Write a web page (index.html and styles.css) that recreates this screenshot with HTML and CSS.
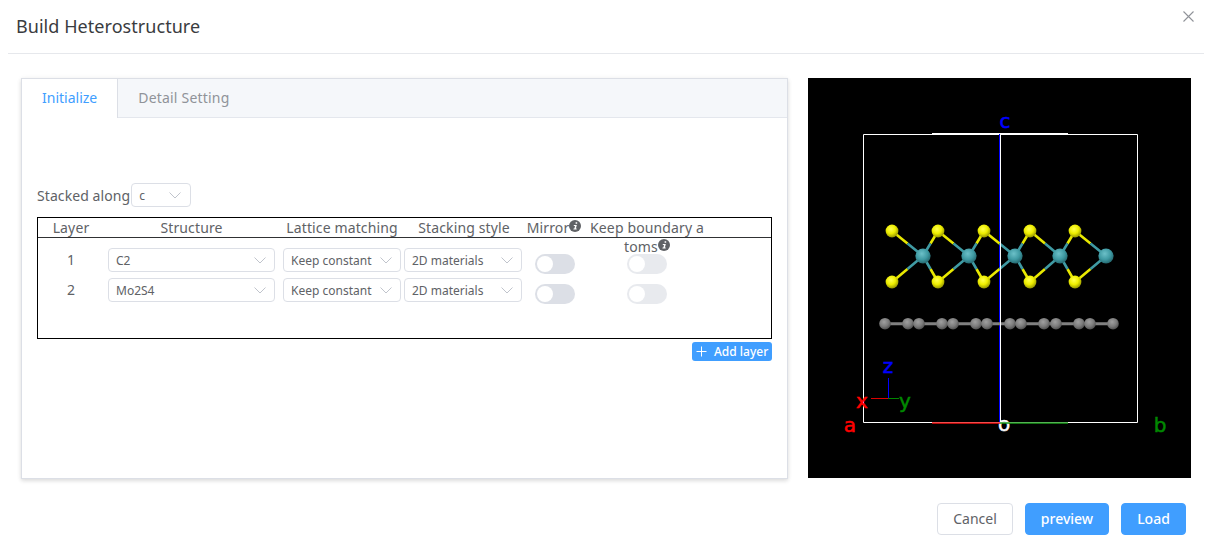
FILE: index.html
```html
<!DOCTYPE html>
<html lang="en">
<head>
<meta charset="utf-8">
<title>Build Heterostructure</title>
<link rel="stylesheet" href="styles.css">
</head>
<body>
<div class="dialog">
  <header class="dialog-header">
    <h1 class="dialog-title">Build Heterostructure</h1>
    <svg class="close-icon" viewBox="0 0 11 11"><path d="M.5.5l10 10M10.5.5l-10 10"/></svg>
  </header>
  <main class="dialog-body">
    <section class="card">
      <nav class="tabs">
        <span class="tab tab-active">Initialize</span>
        <span class="tab">Detail Setting</span>
      </nav>
      <div class="tab-content">
        <div class="stack-row">
          <span class="stack-label">Stacked along</span>
          <div class="select select-axis"><span>c</span><svg class="chevron" viewBox="0 0 12 7"><path d="M.5.5L6 6 11.5.5"/></svg></div>
        </div>
        <div class="layer-table">
          <div class="layer-grid layer-head">
            <div class="cell">Layer</div>
            <div class="cell">Structure</div>
            <div class="cell cell-shift">Lattice matching</div>
            <div class="cell cell-shift">Stacking style</div>
            <div class="cell cell-mirror">Mirror<svg class="info" viewBox="0 0 12 12"><circle cx="6" cy="6" r="6"/><path class="info-i" d="M6.6 2.2h1.6v1.6H6.6zM4.9 4.9h2.9l-.9 3.7h.9l-.2 1H4.4l.2-1h.8l.6-2.7H4.7z"/></svg></div>
            <div class="cell cell-break">Keep boundary atoms<svg class="info" viewBox="0 0 12 12"><circle cx="6" cy="6" r="6"/><path class="info-i" d="M6.6 2.2h1.6v1.6H6.6zM4.9 4.9h2.9l-.9 3.7h.9l-.2 1H4.4l.2-1h.8l.6-2.7H4.7z"/></svg></div>
          </div>
          <div class="layer-rows">
            <div class="layer-grid layer-row">
              <div class="row-num">1</div>
              <div class="select select-structure"><span>C2</span><svg class="chevron" viewBox="0 0 12 7"><path d="M.5.5L6 6 11.5.5"/></svg></div>
              <div class="select select-lattice"><span>Keep constant</span><svg class="chevron" viewBox="0 0 12 7"><path d="M.5.5L6 6 11.5.5"/></svg></div>
              <div class="select select-stack"><span>2D materials</span><svg class="chevron" viewBox="0 0 12 7"><path d="M.5.5L6 6 11.5.5"/></svg></div>
              <div class="switch"><i></i></div>
              <div class="switch switch-disabled"><i></i></div>
            </div>
            <div class="layer-grid layer-row">
              <div class="row-num">2</div>
              <div class="select select-structure"><span>Mo2S4</span><svg class="chevron" viewBox="0 0 12 7"><path d="M.5.5L6 6 11.5.5"/></svg></div>
              <div class="select select-lattice"><span>Keep constant</span><svg class="chevron" viewBox="0 0 12 7"><path d="M.5.5L6 6 11.5.5"/></svg></div>
              <div class="select select-stack"><span>2D materials</span><svg class="chevron" viewBox="0 0 12 7"><path d="M.5.5L6 6 11.5.5"/></svg></div>
              <div class="switch"><i></i></div>
              <div class="switch switch-disabled"><i></i></div>
            </div>
          </div>
        </div>
        <div class="add-row">
          <button class="add-btn"><svg viewBox="0 0 11 11"><path d="M5.5.5v10M.5 5.5h10"/></svg>Add layer</button>
        </div>
      </div>
    </section>
    <svg class="viewer" viewBox="808 78 383 400">
      <defs>
        <radialGradient id="gy" cx=".42" cy=".35" r=".7"><stop offset="0" stop-color="#ffff50"/><stop offset=".5" stop-color="#eeee00"/><stop offset="1" stop-color="#8a8a00"/></radialGradient>
        <radialGradient id="gt" cx=".42" cy=".35" r=".7"><stop offset="0" stop-color="#6cc0c8"/><stop offset=".55" stop-color="#3f9aa3"/><stop offset="1" stop-color="#205f66"/></radialGradient>
        <radialGradient id="gc" cx=".42" cy=".35" r=".7"><stop offset="0" stop-color="#a0a0a0"/><stop offset=".55" stop-color="#7c7c7c"/><stop offset="1" stop-color="#484848"/></radialGradient>
        <circle id="ay" r="6.4" fill="url(#gy)"/>
        <circle id="at" r="7.6" fill="url(#gt)"/>
        <circle id="ac" r="5.8" fill="url(#gc)"/>
      </defs>
      <text class="lbl lbl-white" x="1004" y="431">o</text>
      <path class="cell-line" d="M863.5 134.5H1137.5V422.5H863.5Z"/>
      <path class="cell-top" d="M932 133.5H1068"/>
      <path class="axis-blue" d="M999.5 134V422"/>
      <path class="axis-white" d="M1000.5 134V422"/>
      <path class="bond-c" d="M885 323.7H1113"/>
      <path class="bond-y" d="M892 231L907.5 243.5M938 231L930.5 243.5M938 231L953.5 243.5M984 231L976.5 243.5M984 231L999.5 243.5M1030 231L1022.5 243.5M1030 231L1045 243.5M1075 231L1067.5 243.5M1075 231L1090.5 243.5M892 282L907.5 269M938 282L930.5 269M938 282L953.5 269M984 282L976.5 269M984 282L999.5 269M1030 282L1022.5 269M1030 282L1045 269M1075 282L1067.5 269M1075 282L1090.5 269"/>
      <path class="bond-t" d="M907.5 243.5L923 256M930.5 243.5L923 256M953.5 243.5L969 256M976.5 243.5L969 256M999.5 243.5L1015 256M1022.5 243.5L1015 256M1045 243.5L1060 256M1067.5 243.5L1060 256M1090.5 243.5L1106 256M907.5 269L923 256M930.5 269L923 256M953.5 269L969 256M976.5 269L969 256M999.5 269L1015 256M1022.5 269L1015 256M1045 269L1060 256M1067.5 269L1060 256M1090.5 269L1106 256"/>
      <use href="#ac" x="885" y="323.7"/><use href="#ac" x="908" y="323.7"/><use href="#ac" x="919" y="323.7"/><use href="#ac" x="942" y="323.7"/><use href="#ac" x="953" y="323.7"/><use href="#ac" x="976" y="323.7"/><use href="#ac" x="987" y="323.7"/><use href="#ac" x="1010" y="323.7"/><use href="#ac" x="1021" y="323.7"/><use href="#ac" x="1044" y="323.7"/><use href="#ac" x="1056" y="323.7"/><use href="#ac" x="1079" y="323.7"/><use href="#ac" x="1090" y="323.7"/><use href="#ac" x="1113" y="323.7"/>
      <use href="#ay" x="892" y="231"/><use href="#ay" x="938" y="231"/><use href="#ay" x="984" y="231"/><use href="#ay" x="1030" y="231"/><use href="#ay" x="1075" y="231"/>
      <use href="#ay" x="892" y="282"/><use href="#ay" x="938" y="282"/><use href="#ay" x="984" y="282"/><use href="#ay" x="1030" y="282"/><use href="#ay" x="1075" y="282"/>
      <use href="#at" x="923" y="256"/><use href="#at" x="969" y="256"/><use href="#at" x="1015" y="256"/><use href="#at" x="1060" y="256"/><use href="#at" x="1106" y="256"/>
      <path class="axis-white" d="M1000.5 134V422"/>
      <path class="edge-red" d="M932 423H1000"/>
      <path class="edge-green" d="M1000 423H1068"/>
      <path class="mini-red" d="M871 398.5H888"/>
      <path class="mini-green" d="M888 398.5H899"/>
      <path class="mini-blue" d="M888.5 378V398"/>
      <text class="lbl lbl-blue" x="1005" y="128">c</text>
      <text class="lbl lbl-red" x="850" y="432">a</text>
      <text class="lbl lbl-green" x="1160" y="432">b</text>
      <text class="lbl lbl-red" x="862" y="408">x</text>
      <text class="lbl lbl-green" x="905" y="408">y</text>
      <text class="lbl lbl-blue" x="888" y="373">z</text>
    </svg>
  </main>
  <footer class="dialog-footer">
    <button class="btn btn-cancel">Cancel</button>
    <button class="btn btn-primary btn-preview">preview</button>
    <button class="btn btn-primary btn-load">Load</button>
  </footer>
</div>
</body>
</html>
```
FILE: styles.css
```css
* { box-sizing: border-box; }
html, body { margin: 0; padding: 0; background: #fff; }
body { font-family: "Noto Sans", "Open Sans", sans-serif; color: #606266; font-size: 14px; overflow: hidden; }
.dialog { width: 1212px; height: 552px; }
.dialog-header { position: relative; height: 54px; margin: 0 8px; padding: 0 8px 2px; border-bottom: 1px solid #e6e8ec; display: flex; align-items: center; }
.dialog-title { margin: 0; font-size: 18px; font-weight: 400; line-height: 24px; letter-spacing: .05px; color: #3a3c40; }
.close-icon { position: absolute; right: 10px; top: 11px; width: 11px; height: 11px; fill: none; stroke: #909399; stroke-width: 1.1; }
.dialog-body { display: flex; padding: 24px 0 0 21px; gap: 20px; align-items: flex-start; }
.card { width: 767px; height: 401px; border: 1px solid #dcdfe6; background: #fff; box-shadow: 0 2px 4px rgba(0,0,0,.12), 0 0 6px rgba(0,0,0,.04); }
.tabs { display: flex; height: 39px; background: #f5f7fa; border-bottom: 1px solid #e4e7ed; }
.tab { padding: 0 20px; line-height: 38px; color: #909399; font-size: 14px; letter-spacing: .2px; }
.tab-active { color: #409eff; background: #fff; border-right: 1px solid #dcdfe6; height: 39px; letter-spacing: 0; }
.tab-content { padding: 65px 15px 0; }
.stack-row { display: flex; align-items: center; height: 24px; margin-bottom: 10px; }
.stack-label { letter-spacing: .08px; }
.select { height: 24px; border: 1px solid #dcdfe6; border-radius: 4px; background: #fff; display: flex; align-items: center; justify-content: space-between; padding: 0 8px 0 7px; font-size: 12px; color: #606266; }
.select-axis { width: 60px; margin-left: 1px; padding-right: 9px; }
.chevron { width: 12px; height: 7px; fill: none; stroke: #c0c4cc; stroke-width: 1; }
.layer-table { width: 735px; height: 122px; border: 1px solid #000; }
.layer-grid { display: grid; grid-template-columns: 66px 175px 124px 120px 64px 120px; }
.layer-head { height: 19px; line-height: 19px; }
.cell { text-align: center; word-break: break-all; letter-spacing: .13px; }
.cell-shift { padding-left: 2px; }
.cell-mirror { white-space: nowrap; padding-right: 2px; }
.cell-break { padding: 0 1px; }
.info { width: 12px; height: 12px; vertical-align: 1px; fill: #606266; }
.info-i { fill: #fff; }
.layer-rows { border-top: 1px solid #303133; padding-top: 10px; }
.layer-row { height: 30px; align-items: start; }
.row-num { text-align: center; line-height: 24px; }
.select-structure { width: 167px; margin-left: 4px; }
.select-lattice { width: 118px; margin-left: 4px; }
.select-stack { width: 118px; margin-left: 1px; }
.switch { width: 40px; height: 20px; border-radius: 10px; background: #dcdfe6; position: relative; justify-self: center; margin-top: 6px; }
.switch i { position: absolute; left: 2px; top: 2px; width: 16px; height: 16px; border-radius: 50%; background: #fff; }
.switch-disabled { opacity: .65; }
.add-row { display: flex; justify-content: flex-end; width: 735px; margin-top: 3px; }
.add-btn { display: flex; align-items: center; gap: 7px; height: 19px; width: 80px; padding: 0 0 0 4px; border: 0; border-radius: 3px; background: #409eff; color: #fff; font: 500 12px "Noto Sans", sans-serif; }
.add-btn svg { width: 11px; height: 11px; fill: none; stroke: #fff; stroke-width: 1; }
.viewer { width: 383px; height: 400px; background: #000; display: block; }
.cell-line { fill: none; stroke: #fff; stroke-width: 1; }
.cell-top { fill: none; stroke: #fff; stroke-width: 1; }
.axis-blue { stroke: #00f; stroke-width: 1; }
.axis-white { stroke: #fff; stroke-width: 1; }
.bond-c { stroke: #808080; stroke-width: 3; }
.bond-y { stroke: #e8e800; stroke-width: 2.6; fill: none; }
.bond-t { stroke: #3f9aa3; stroke-width: 2.6; fill: none; }
.edge-red { stroke: #f01010; stroke-width: 1.5; }
.edge-green { stroke: #1a9a1a; stroke-width: 1.5; }
.mini-red { stroke: #d00; stroke-width: 1; }
.mini-green { stroke: #080; stroke-width: 1; }
.mini-blue { stroke: #00f; stroke-width: 1; }
.lbl { font: 400 20px "DejaVu Sans", sans-serif; text-anchor: middle; stroke-width: .5px; }
.lbl-blue { fill: #00f; stroke: #00f; }
.lbl-red { fill: #f00; stroke: #f00; }
.lbl-green { fill: #080; stroke: #080; }
.lbl-white { fill: #fff; stroke: #fff; }
.dialog-footer { display: flex; justify-content: flex-end; gap: 12px; padding: 24px 26px 0 0; }
.btn { height: 32px; padding: 0 0 2px; border: 1px solid #dcdfe6; border-radius: 4px; background: #fff; color: #606266; font: 14px "Noto Sans", sans-serif; }
.btn-cancel { width: 76px; }
.btn-preview { width: 84px; }
.btn-load { width: 65px; }
.btn-primary { background: #409eff; border-color: #409eff; color: #fff; font-weight: 500; }
```
